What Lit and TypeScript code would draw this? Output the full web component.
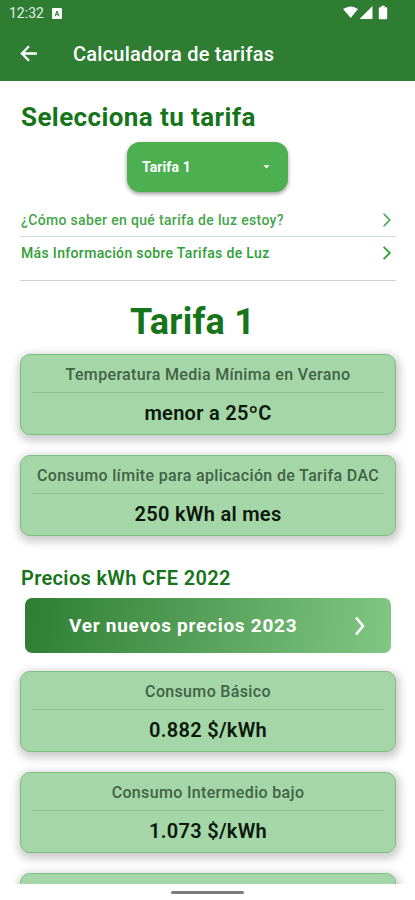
import { LitElement, html, css, svg } from "lit";
import { customElement, property } from "lit/decorators.js";

const chevron = (w: number) => html`<svg width="10" height="16" viewBox="0 0 10 16" fill="none" stroke="currentColor" stroke-width=${w}>
  ${svg`<path d="M1.6 1.8 L7.8 8 L1.6 14.2"/>`}</svg>`;

@customElement("rate-card")
class RateCard extends LitElement {
  @property() label = "";
  @property() value = "";
  static styles = css`
    :host { display: block; flex: none; box-sizing: border-box; height: 81px; margin-bottom: 20px; padding: 0 11px;
      border: 1px solid #7cbf80; border-radius: 10px; background: #a5d6a7; text-align: center;
      box-shadow: 1px 3px 9px 3px rgba(0, 0, 0, 0.2); white-space: nowrap; }
    .label { height: 38px; line-height: 40px; box-sizing: border-box; border-bottom: 1px solid #8fc292;
      font-size: 16px; font-weight: 500; letter-spacing: 0.34px; color: #416345; }
    .value { line-height: 40px; font-size: 20px; font-weight: 600; letter-spacing: 0.3px; color: #0a180b; }
  `;
  render() {
    return html`<div class="label">${this.label}</div><div class="value">${this.value}</div>`;
  }
}

@customElement("app-root")
class AppRoot extends LitElement {
  static styles = css`
    :host { display: flex; flex-direction: column; height: 900px; width: 415px; overflow: hidden; background: #fff;
      font-family: Roboto, "Liberation Sans", sans-serif; white-space: nowrap; }
    .top { height: 81px; flex: none; background: #2e7d32; color: #fff; }
    .status { display: flex; align-items: center; height: 26px; padding: 0 26px 0 9px; color: #e3efe3; font-size: 14px; }
    .status .app { margin-left: 8px; }
    .status .icons { margin-left: auto; }
    .bar { display: flex; align-items: center; height: 55px; padding-left: 20px; }
    .bar h1 { margin: 0 0 0 35px; font-size: 20px; font-weight: 500; letter-spacing: 0.23px; }
    .body { flex: none; height: 803px; box-sizing: border-box; padding: 20px 19px 0 20px; overflow: hidden;
      display: flex; flex-direction: column; }
    .body > * { flex: none; }
    h2 { margin: 0 0 0 1px; height: 32px; line-height: 32px; font-size: 26px; font-weight: 700; letter-spacing: 0.4px; color: #16741b; }
    .select { align-self: center; margin: 9px 1px 0 0; height: 50px; width: 161px; box-sizing: border-box; display: flex; align-items: center;
      justify-content: space-between; padding: 0 18px 0 15px; border-radius: 13px; background: #4caf50; color: #fff;
      font-size: 14px; font-weight: 700; letter-spacing: 0.1px; box-shadow: 0 2px 4px rgba(0, 0, 0, 0.4); }
    .links { margin-top: 12px; height: 77px; box-sizing: border-box; border-bottom: 1px solid #d0d0d0; }
    .link { display: flex; align-items: center; justify-content: space-between; height: 32px; padding: 0 4px 0 1px;
      font-size: 14px; font-weight: 500; letter-spacing: 0.34px; color: #2fa036; }
    .link.first { height: 33px; border-bottom: 1px solid #c5e2d2; box-sizing: border-box; color: #43a549; }
    .name { height: 73px; line-height: 82px; padding-right: 31px; text-align: center; font-size: 36px; font-weight: 700;
      letter-spacing: 0.2px; color: #16741b; }
    h3 { margin: 11px 0 0 1px; height: 22px; line-height: 23px; font-size: 20px; font-weight: 600; letter-spacing: 0.33px; color: #16741b; }
    .cta { display: flex; flex: none; align-items: center; justify-content: space-between; height: 55px; box-sizing: border-box;
      margin: 9px 5px 18px; padding: 0 25px 0 44px; border-radius: 7px; color: #fff; font-size: 19px; font-weight: 700;
      letter-spacing: 0.73px; background: linear-gradient(100deg, #2e7d32, #81c784); }
    .home { width: 73px; height: 3px; margin: 7px auto 0; border-radius: 2px; background: #7d7d7d; }
    svg { display: block; flex: none; }
  `;
  render() {
    return html`
      <div class="top">
        <div class="status">
          <span>12:32</span>
          <svg class="app" width="10" height="11" viewBox="0 0 10 11"><rect width="10" height="11" rx="1" fill="#fff"/><path d="M3 8.2L5 3l2 5.2M3.6 6.6h2.8" fill="none" stroke="#2e7d32" stroke-width="1"/></svg>
          <svg class="icons" width="47" height="16" viewBox="0 0 47 16" fill="#fff"><path d="M1 4Q9 -1 16 4L8.7 13z"/><path d="M30.5 1v13H17.5z"/><path d="M36.8 3.2q0-.9.9-.9h1.6V.8h3.4v1.5h1.6q.9 0 .9.9v10.1q0 .9-.9.9h-6.6q-.9 0-.9-.9z"/></svg>
        </div>
        <div class="bar">
          <svg width="18" height="18" viewBox="0 0 18 18" fill="none" stroke="#fff" stroke-width="2.3"><path d="M16.8 8.5H2.5M9 1.3L1.9 8.5L9 15.7"/></svg>
          <h1>Calculadora de tarifas</h1>
        </div>
      </div>
      <div class="body">
        <h2>Selecciona tu tarifa</h2>
        <div class="select"><span>Tarifa 1</span><svg width="7" height="4" viewBox="0 0 7 4"><path d="M0.5 0.3h6L3.5 3.6z" fill="#fff"/></svg></div>
        <div class="links">
          <div class="link first"><span>¿Cómo saber en qué tarifa de luz estoy?</span>${chevron(1.6)}</div>
          <div class="link second"><span>Más Información sobre Tarifas de Luz</span>${chevron(1.8)}</div>
        </div>
        <div class="name">Tarifa 1</div>
        <rate-card label="Temperatura Media Mínima en Verano" value="menor a 25ºC"></rate-card>
        <rate-card label="Consumo límite para aplicación de Tarifa DAC" value="250 kWh al mes"></rate-card>
        <h3>Precios kWh CFE 2022</h3>
        <div class="cta"><span>Ver nuevos precios 2023</span><svg width="12" height="20" viewBox="0 0 12 20"><path d="M2 1.5L9 10L2 18.5" fill="none" stroke="#fff" stroke-width="2.6"/></svg></div>
        <rate-card label="Consumo Básico" value="0.882 $/kWh"></rate-card>
        <rate-card label="Consumo Intermedio bajo" value="1.073 $/kWh"></rate-card>
        <rate-card></rate-card>
      </div>
      <div class="home"></div>
    `;
  }
}
